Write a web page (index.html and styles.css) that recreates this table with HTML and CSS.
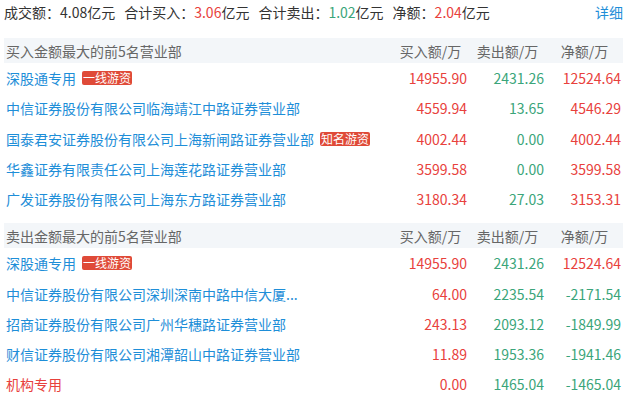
FILE: index.html
```html
<!DOCTYPE html>
<html lang="zh">
<head>
<meta charset="utf-8">
<link rel="stylesheet" href="styles.css">
</head>
<body>
<div class="page">
  <div class="summary">
    <span class="item">成交额：4.08亿元</span>
    <span class="item">合计买入：<span class="red">3.06</span>亿元</span>
    <span class="item">合计卖出：<span class="green">1.02</span>亿元</span>
    <span class="item">净额：<span class="red">2.04</span>亿元</span>
    <a class="detail">详细</a>
  </div>

  <div class="section">
    <div class="row head">
      <div class="name">买入金额最大的前5名营业部</div>
      <div class="col">买入额/万</div>
      <div class="col">卖出额/万</div>
      <div class="col">净额/万</div>
    </div>
    <div class="row">
      <div class="name"><span class="blue">深股通专用</span><span class="tag">一线游资</span></div>
      <div class="num red">14955.90</div>
      <div class="num green">2431.26</div>
      <div class="num red">12524.64</div>
    </div>
    <div class="row">
      <div class="name"><span class="blue">中信证券股份有限公司临海靖江中路证券营业部</span></div>
      <div class="num red">4559.94</div>
      <div class="num green">13.65</div>
      <div class="num red">4546.29</div>
    </div>
    <div class="row">
      <div class="name"><span class="blue">国泰君安证券股份有限公司上海新闸路证券营业部</span><span class="tag">知名游资</span></div>
      <div class="num red">4002.44</div>
      <div class="num green">0.00</div>
      <div class="num red">4002.44</div>
    </div>
    <div class="row">
      <div class="name"><span class="blue">华鑫证券有限责任公司上海莲花路证券营业部</span></div>
      <div class="num red">3599.58</div>
      <div class="num green">0.00</div>
      <div class="num red">3599.58</div>
    </div>
    <div class="row">
      <div class="name"><span class="blue">广发证券股份有限公司上海东方路证券营业部</span></div>
      <div class="num red">3180.34</div>
      <div class="num green">27.03</div>
      <div class="num red">3153.31</div>
    </div>
  </div>

  <div class="section">
    <div class="row head">
      <div class="name">卖出金额最大的前5名营业部</div>
      <div class="col">买入额/万</div>
      <div class="col">卖出额/万</div>
      <div class="col">净额/万</div>
    </div>
    <div class="row">
      <div class="name"><span class="blue">深股通专用</span><span class="tag">一线游资</span></div>
      <div class="num red">14955.90</div>
      <div class="num green">2431.26</div>
      <div class="num red">12524.64</div>
    </div>
    <div class="row">
      <div class="name"><span class="blue">中信证券股份有限公司深圳深南中路中信大厦...</span></div>
      <div class="num red">64.00</div>
      <div class="num green">2235.54</div>
      <div class="num green">-2171.54</div>
    </div>
    <div class="row">
      <div class="name"><span class="blue">招商证券股份有限公司广州华穗路证券营业部</span></div>
      <div class="num red">243.13</div>
      <div class="num green">2093.12</div>
      <div class="num green">-1849.99</div>
    </div>
    <div class="row">
      <div class="name"><span class="blue">财信证券股份有限公司湘潭韶山中路证券营业部</span></div>
      <div class="num red">11.89</div>
      <div class="num green">1953.36</div>
      <div class="num green">-1941.46</div>
    </div>
    <div class="row">
      <div class="name"><span class="red">机构专用</span></div>
      <div class="num red">0.00</div>
      <div class="num green">1465.04</div>
      <div class="num green">-1465.04</div>
    </div>
  </div>
</div>
</body>
</html>
```

FILE: styles.css
```css
html, body {
  margin: 0;
  padding: 0;
  background: #ffffff;
}

body {
  font-family: "Noto Sans CJK SC", "Noto Sans", sans-serif;
  font-size: 14px;
  color: #333333;
}

.page {
  width: 619px;
  padding: 0 8px 0 4px;
}

.summary {
  display: flex;
  align-items: center;
  height: 25px;
  line-height: 25px;
  gap: 9px;
  color: #333333;
}

.summary .detail {
  margin-left: auto;
  color: #1e8ed8;
  cursor: pointer;
}

.section {
  margin-top: 13px;
}

.section + .section {
  margin-top: 9px;
}

.row {
  display: grid;
  grid-template-columns: 1fr 77px 77px 77px;
  height: 30.25px;
  align-items: center;
}

.row.head {
  height: 25px;
  background: #f3f6f9;
  color: #666666;
}

.name {
  padding-left: 2px;
  display: flex;
  align-items: center;
  white-space: nowrap;
}

.col {
  text-align: center;
}

.num {
  text-align: right;
  padding-right: 2px;
}

.red {
  color: #e8413c;
}

.green {
  color: #3aa57a;
}

.blue {
  color: #1e8ed8;
}

.tag {
  margin-left: 6px;
  background: #df4a38;
  color: #ffffff;
  font-size: 12px;
  line-height: 14px;
  height: 14px;
  padding: 0 1px;
  border-radius: 2px;
}
```
